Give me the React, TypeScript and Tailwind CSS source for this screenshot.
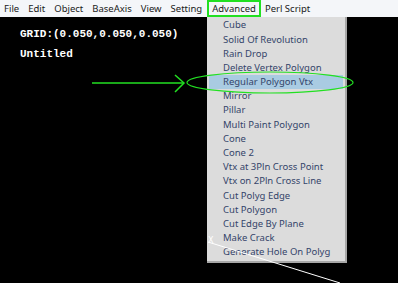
const menus = ["File", "Edit", "Object", "BaseAxis", "View", "Setting"];

const items = [
  "Cube",
  "Solid Of Revolution",
  "Rain Drop",
  "Delete Vertex Polygon",
  "Regular Polygon Vtx",
  "Mirror",
  "Pillar",
  "Multi Paint Polygon",
  "Cone",
  "Cone 2",
  "Vtx at 3Pln Cross Point",
  "Vtx on 2Pln Cross Line",
  "Cut Polyg Edge",
  "Cut Polygon",
  "Cut Edge By Plane",
  "Make Crack",
  "Generate Hole On Polyg",
];

export default function App() {
  return (
    <div className="relative h-[283px] w-[398px] overflow-hidden bg-black font-['Noto_Sans',sans-serif]">
      {/* menu bar */}
      <div className="flex h-[17px] items-center bg-[#f4f6f9] text-[9.5px] text-[#1a1a1a]">
        <div className="flex gap-[9px] pl-[4px] pr-[5px]">
          {menus.map((m) => (
            <span key={m} className="leading-[17px]">
              {m}
            </span>
          ))}
        </div>
        <span className="box-border h-[17px] border-2 border-[#22e022] px-[3px] leading-[13px]">
          Advanced
        </span>
        <span className="px-[4px] leading-[17px]">Perl Script</span>
      </div>

      {/* viewport text */}
      <div className="px-[20px] pt-[7px] font-['Liberation_Mono',monospace] text-[11px] font-bold leading-[20px] text-white">
        <div>GRID:(0.050,0.050,0.050)</div>
        <div>Untitled</div>
      </div>

      {/* dropdown */}
      <div className="absolute left-[207px] top-[17px] w-[140px] border-r-2 border-b-2 border-[#a7a7a7] bg-[#dcdcdc] pt-[1px] pb-[2px] text-[9.5px] text-[#34446a]">
        {items.map((it) => (
          <div
            key={it}
            className={
              it === "Regular Polygon Vtx"
                ? "mx-[2px] flex h-[14.2px] items-center bg-[#a9cbe2] pl-[14px] leading-none"
                : "flex h-[14.2px] items-center pl-[16px] leading-none"
            }
          >
            {it}
          </div>
        ))}
      </div>

      {/* annotations */}
      <svg className="pointer-events-none absolute left-0 top-0" width="398" height="283">
        <line x1="92" y1="83" x2="184" y2="83" stroke="#22e022" strokeWidth="1.5" />
        <polyline points="175,75 184,83 175,92" fill="none" stroke="#22e022" strokeWidth="1.5" />
        <ellipse cx="270" cy="82.5" rx="83" ry="10.5" fill="none" stroke="#22e022" strokeWidth="1.2" />
        <line x1="208" y1="242" x2="340" y2="283" stroke="#ffffff" strokeWidth="1" />
        <text x="208" y="243" fill="#ffffff" fontSize="8" fontFamily="DejaVu Sans">X</text>
      </svg>
    </div>
  );
}
